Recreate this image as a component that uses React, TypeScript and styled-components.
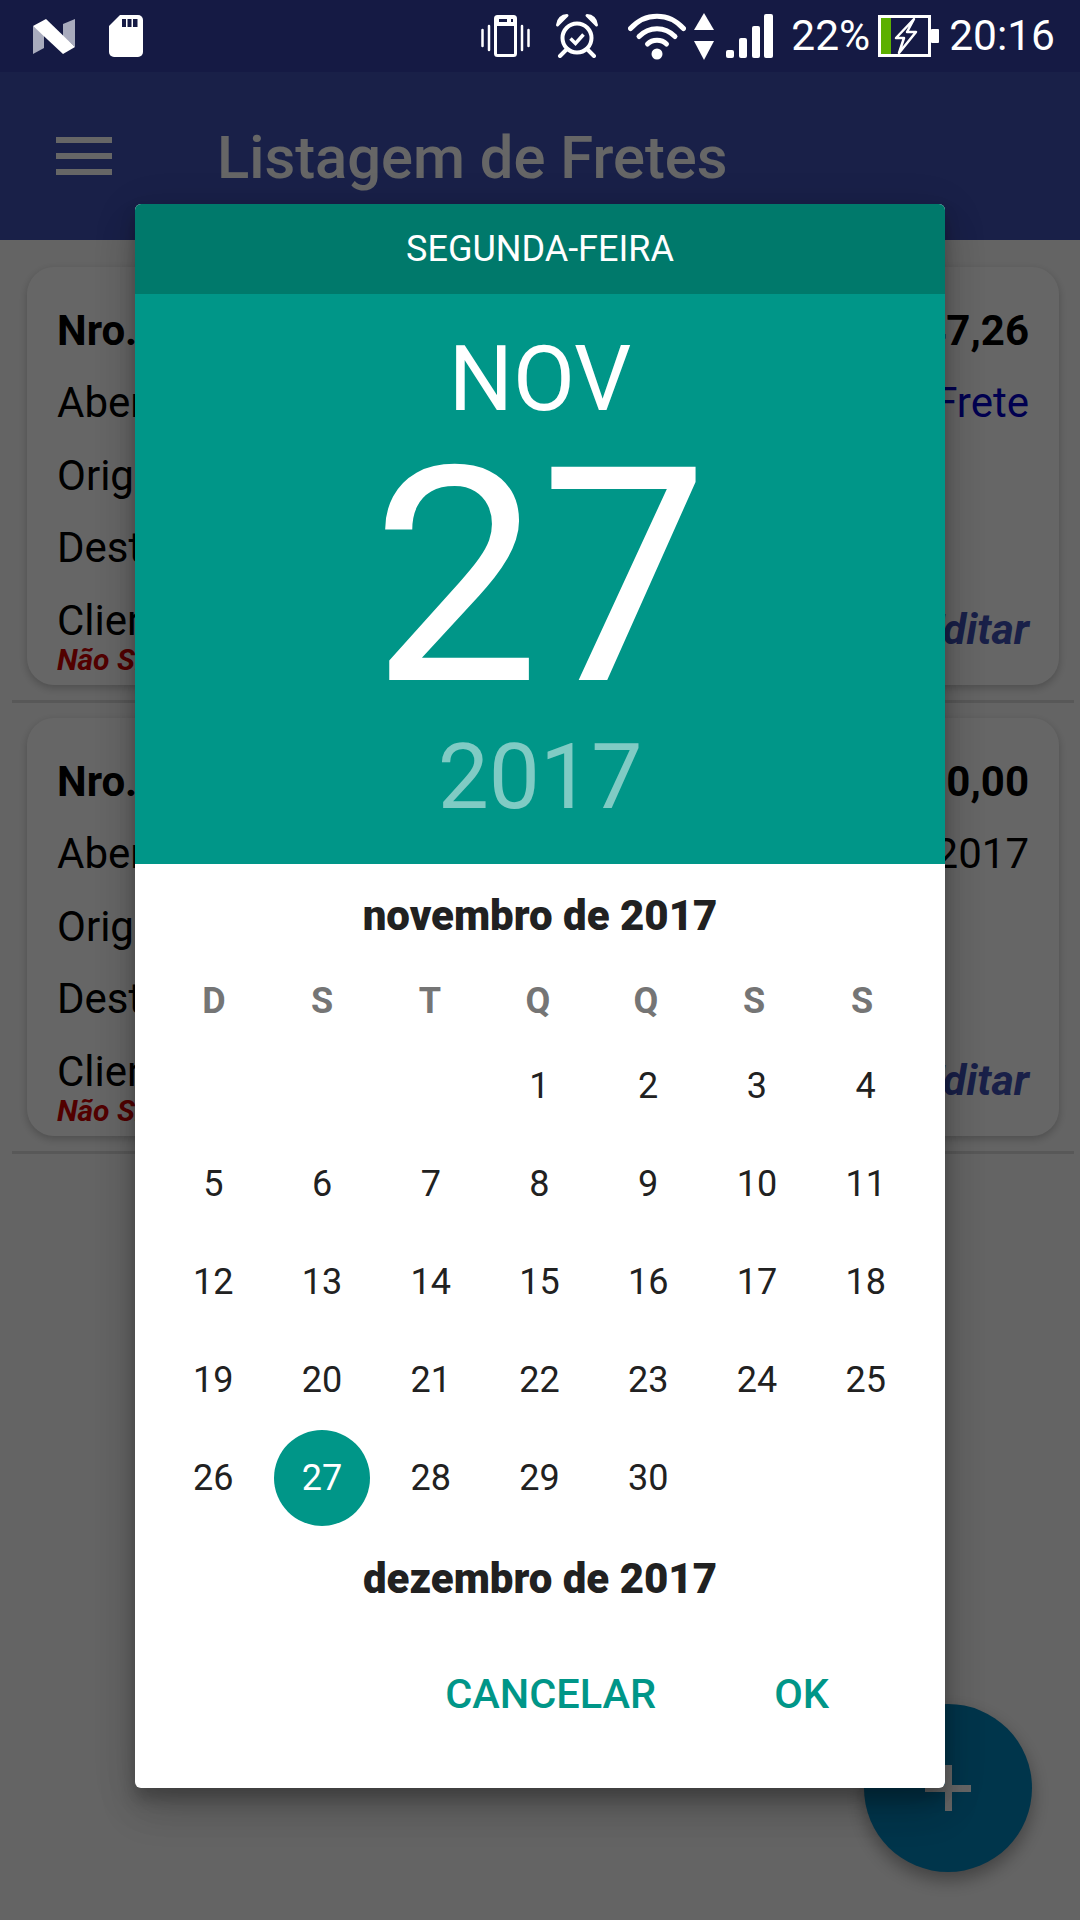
import styled, { createGlobalStyle } from "styled-components";

const GlobalStyle = createGlobalStyle`
  html, body {
    margin: 0;
    padding: 0;
    background: #fafafa;
  }
  * {
    box-sizing: border-box;
  }
`;

const Screen = styled.div`
  width: 1080px;
  height: 1920px;
  display: flex;
  flex-direction: column;
  overflow: hidden;
  font-family: Roboto, "Liberation Sans", sans-serif;
`;

const StatusBar = styled.div`
  height: 72px;
  flex: none;
  display: flex;
  align-items: center;
  justify-content: space-between;
  padding: 0 25px 0 33px;
  background: #151a44;
  color: #fff;
`;

const StatusGroup = styled.div`
  display: flex;
  align-items: center;
`;

const StatusSlot = styled.div<{ $gap: number }>`
  display: flex;
  margin-left: ${(p) => p.$gap}px;
`;

const StatusText = styled.span<{ $gap: number }>`
  margin-left: ${(p) => p.$gap}px;
  font-size: 42.500px;
  line-height: 48px;
`;

const Main = styled.div`
  position: relative;
  flex: 1;
  background: #fafafa;
`;

const AppBar = styled.div`
  height: 168px;
  display: flex;
  align-items: center;
  padding: 0 0 0 56px;
  background: #3f51b5;
  color: #fff;
`;

const MenuIcon = styled.div`
  width: 56px;
  height: 38px;
  display: flex;
  flex-direction: column;
  justify-content: space-between;
  margin-right: 105px;

  span {
    height: 6px;
    background: #fff;
  }
`;

const Title = styled.div`
  padding-top: 4px;
  font-size: 59.700px;
  font-weight: 500;
  line-height: 64px;
`;

const List = styled.div`
  padding: 27px 6px 0 12px;
`;

const Card = styled.div`
  height: 418px;
  margin: 0 15px;
  padding: 27px 30px 0;
  border-radius: 27px;
  background: #fff;
  box-shadow: 0 3px 8px rgba(0, 0, 0, 0.22);
  color: #000;
`;

const CardRow = styled.div`
  height: 72.500px;
  display: flex;
  align-items: center;
  justify-content: space-between;
  font-size: 42px;
  white-space: nowrap;
`;

const Strong = styled.span`
  font-weight: 700;
`;

const LinkText = styled.span`
  color: #0000c8;
`;

const EditLink = styled.span`
  margin-top: 17px;
  line-height: 52px;
  font-size: 43px;
  font-style: italic;
  font-weight: 700;
  color: #3f51b5;
`;

const SyncStatus = styled.div`
  margin-top: -12px;
  font-size: 30px;
  line-height: 30px;
  font-style: italic;
  font-weight: 700;
  color: #cc0000;
`;

const Separator = styled.div`
  height: 3px;
  margin: 15px 0;
  background: #dcdcdc;
`;

const Fab = styled.div`
  position: absolute;
  right: 48px;
  bottom: 48px;
  width: 168px;
  height: 168px;
  border-radius: 50%;
  background: #0284bc;
  box-shadow: 0 8px 18px rgba(0, 0, 0, 0.35);

  &::before,
  &::after {
    content: "";
    position: absolute;
    background: #fff;
  }
  &::before {
    left: 61px;
    top: 81px;
    width: 46px;
    height: 7px;
  }
  &::after {
    left: 81px;
    top: 61px;
    width: 7px;
    height: 46px;
  }
`;

const Overlay = styled.div`
  position: absolute;
  inset: 0;
  background: rgba(0, 0, 0, 0.6);
`;

const Dialog = styled.div`
  position: absolute;
  left: 135px;
  top: 132px;
  width: 810px;
  border-radius: 6px;
  overflow: hidden;
  background: #fff;
  box-shadow: 0 24px 38px rgba(0, 0, 0, 0.14), 0 9px 46px rgba(0, 0, 0, 0.12),
    0 11px 15px rgba(0, 0, 0, 0.2);
`;

const DayName = styled.div`
  height: 90px;
  display: flex;
  align-items: center;
  justify-content: center;
  background: #00796b;
  color: #fff;
  font-size: 36px;
`;

const DatePanel = styled.div`
  height: 570px;
  padding-top: 36px;
  display: flex;
  flex-direction: column;
  align-items: center;
  background: #009688;
  color: #fff;
`;

const MonthLabel = styled.div`
  font-size: 90px;
  line-height: 100px;
`;

const DayLabel = styled.div`
  height: 290px;
  margin-top: 3px;
  font-size: 300px;
  font-weight: 400;
  line-height: 290px;
`;

const YearLabel = styled.div`
  margin-top: 4px;
  font-size: 91px;
  line-height: 100px;
  color: #80cbc4;
`;

const CalendarMonth = styled.div`
  height: 102px;
  display: flex;
  align-items: center;
  justify-content: center;
  font-size: 42px;
  font-weight: 900;
  color: #212121;
`;

const WeekRow = styled.div`
  width: 756px;
  height: 70px;
  margin: 0 0 1px 25px;
  display: grid;
  grid-template-columns: repeat(7, 1fr);
  align-items: center;
  justify-items: center;
  font-size: 36px;
  font-weight: 700;
  color: #757575;
`;

const DayGrid = styled.div`
  width: 761px;
  margin-left: 24px;
  display: grid;
  grid-template-columns: repeat(7, 1fr);
  grid-auto-rows: 98px;
  align-items: center;
  justify-items: center;
  font-size: 36px;
  color: #212121;
`;

const DayCell = styled.div<{ $selected?: boolean }>`
  width: 96px;
  height: 96px;
  display: flex;
  align-items: center;
  justify-content: center;
  border-radius: 50%;
  background: ${(p) => (p.$selected ? "#009688" : "transparent")};
  color: ${(p) => (p.$selected ? "#fff" : "inherit")};
`;

const Actions = styled.div`
  display: flex;
  justify-content: flex-end;
  gap: 118px;
  padding: 35px 116px 64px 0;
`;

const ActionButton = styled.div`
  font-size: 41.500px;
  font-weight: 500;
  line-height: 60px;
  color: #009688;
`;

const WEEK_DAYS = ["D", "S", "T", "Q", "Q", "S", "S"];
const LEADING_BLANKS = 3;
const DAYS_IN_MONTH = 30;
const SELECTED_DAY = 27;

const FRETES = [
  { numero: 1042, valor: "R$ 1.347,26", abertura: "27/11/2017", link: "Ver Frete" },
  { numero: 1041, valor: "R$ 2.500,00", abertura: "27/11/2017" }
];

const NougatLogo = () => (
  <svg width="42" height="35" viewBox="0 0 42 35">
    <polygon points="0,7 11,16 11,29 0,35" fill="#a8abbd" />
    <polygon points="30,5 42,0 42,28 30,17" fill="#a8abbd" />
    <polygon points="0,7 13,0 42,28 30,35" fill="#fff" />
  </svg>
);

const SdCardIcon = () => (
  <svg width="34" height="42" viewBox="0 0 34 42">
    <path d="M11 0H29a5 5 0 0 1 5 5V37a5 5 0 0 1-5 5H5a5 5 0 0 1-5-5V11Z" fill="#fff" />
    <path d="M13 4h4v8h-4zM18.500 4h4v8h-4zM24 4h4.500v8H24z" fill="#151a44" />
  </svg>
);

const VibrateIcon = () => (
  <svg width="49" height="42" viewBox="0 0 49 42">
    <rect x="14.500" y="1.500" width="20" height="39" rx="2" fill="none" stroke="#fff" strokeWidth="3" />
    <rect x="14" y="1" width="21" height="10" rx="2" fill="#fff" />
    <rect x="18" y="4" width="8" height="3" fill="#151a44" />
    <rect x="30" y="4" width="2" height="3" fill="#151a44" />
    <path d="M1.500 15V31M8 11V35M41 11V35M47.500 15V31" stroke="#fff" strokeWidth="2.500" strokeLinecap="round" />
  </svg>
);

const AlarmIcon = () => (
  <svg width="42" height="44" viewBox="0 0 42 44">
    <circle cx="21" cy="24" r="14.500" fill="none" stroke="#fff" strokeWidth="4" />
    <path d="M14.500 24.500l5 5 8-9" fill="none" stroke="#fff" strokeWidth="3.500" />
    <path d="M1.500 11C2 5 6 1.500 11 1.500ZM40.500 11C40 5 36 1.500 31 1.500Z" fill="#fff" stroke="#fff" strokeWidth="3" strokeLinejoin="round" />
    <path d="M10 36l-6 6M32 36l6 6" stroke="#fff" strokeWidth="4" strokeLinecap="round" />
  </svg>
);

const WifiIcon = () => (
  <svg width="58" height="47" viewBox="0 0 58 47" fill="none" stroke="#fff" strokeWidth="5" strokeLinecap="round">
    <path d="M2.500 15.500C17 -1 41 -1 55.500 15.500" />
    <path d="M11 23.500C21 13 37 13 47 23.500" />
    <path d="M19.500 31C24.500 26 33.500 26 38.500 31" />
    <circle cx="29" cy="41" r="5.500" fill="#fff" stroke="none" />
  </svg>
);

const DataArrowsIcon = () => (
  <svg width="20" height="47" viewBox="0 0 20 47">
    <polygon points="10,0 20,17 0,17" fill="#fff" />
    <polygon points="0,28 20,28 10,47" fill="#fff" />
  </svg>
);

const SignalIcon = () => (
  <svg width="47" height="44" viewBox="0 0 47 44" fill="#fff">
    <rect x="0" y="36" width="8" height="8" rx="2" />
    <rect x="13" y="24" width="8" height="20" rx="2" />
    <rect x="26" y="12" width="8" height="32" rx="2" />
    <rect x="38" y="0" width="9" height="44" rx="2" />
  </svg>
);

const BatteryIcon = () => (
  <svg width="61" height="42" viewBox="0 0 61 42">
    <rect x="3" y="3" width="10" height="36" fill="#5cb000" />
    <rect x="1.500" y="1.500" width="50" height="39" fill="none" stroke="#fff" strokeWidth="3" />
    <rect x="53" y="14" width="8" height="14" rx="1" fill="#fff" />
    <polygon points="36,4 18,23 26,23 21,38 38,17 29,17" fill="#151a44" stroke="#fff" strokeWidth="2.500" strokeLinejoin="round" />
  </svg>
);

const App = () => {
  const days = Array.from({ length: DAYS_IN_MONTH }, (_, i) => i + 1);
  const blanks = Array.from({ length: LEADING_BLANKS }, (_, i) => i);

  return (
    <Screen>
      <GlobalStyle />
      <StatusBar>
        <StatusGroup>
          <NougatLogo />
          <StatusSlot $gap={34}>
            <SdCardIcon />
          </StatusSlot>
        </StatusGroup>
        <StatusGroup>
          <VibrateIcon />
          <StatusSlot $gap={26}>
            <AlarmIcon />
          </StatusSlot>
          <StatusSlot $gap={30}>
            <WifiIcon />
          </StatusSlot>
          <StatusSlot $gap={8}>
            <DataArrowsIcon />
          </StatusSlot>
          <StatusSlot $gap={12}>
            <SignalIcon />
          </StatusSlot>
          <StatusText $gap={18}>22%</StatusText>
          <StatusSlot $gap={8}>
            <BatteryIcon />
          </StatusSlot>
          <StatusText $gap={10}>20:16</StatusText>
        </StatusGroup>
      </StatusBar>

      <Main>
        <AppBar>
          <MenuIcon>
            <span />
            <span />
            <span />
          </MenuIcon>
          <Title>Listagem de Fretes</Title>
        </AppBar>

        <List>
          {FRETES.map((frete) => (
            <div key={frete.numero}>
              <Card>
                <CardRow>
                  <Strong>Nro.: {frete.numero}</Strong>
                  <Strong>{frete.valor}</Strong>
                </CardRow>
                <CardRow>
                  <span>Abertura:</span>
                  {frete.link ? <LinkText>{frete.link}</LinkText> : <span>{frete.abertura}</span>}
                </CardRow>
                <CardRow>Origem: Curitiba</CardRow>
                <CardRow>Destino: Joinville</CardRow>
                <CardRow>
                  <span>Cliente: Transportes</span>
                  <EditLink>Editar</EditLink>
                </CardRow>
                <SyncStatus>Não Sincronizado</SyncStatus>
              </Card>
              <Separator />
            </div>
          ))}
        </List>

        <Fab />
        <Overlay />

        <Dialog>
          <DayName>SEGUNDA-FEIRA</DayName>
          <DatePanel>
            <MonthLabel>NOV</MonthLabel>
            <DayLabel>27</DayLabel>
            <YearLabel>2017</YearLabel>
          </DatePanel>
          <CalendarMonth>novembro de 2017</CalendarMonth>
          <WeekRow>
            {WEEK_DAYS.map((day, i) => (
              <span key={i}>{day}</span>
            ))}
          </WeekRow>
          <DayGrid>
            {blanks.map((i) => (
              <DayCell key={`blank-${i}`} />
            ))}
            {days.map((day) => (
              <DayCell key={day} $selected={day === SELECTED_DAY}>
                {day}
              </DayCell>
            ))}
          </DayGrid>
          <CalendarMonth>dezembro de 2017</CalendarMonth>
          <Actions>
            <ActionButton>CANCELAR</ActionButton>
            <ActionButton>OK</ActionButton>
          </Actions>
        </Dialog>
      </Main>
    </Screen>
  );
};

export default App;
